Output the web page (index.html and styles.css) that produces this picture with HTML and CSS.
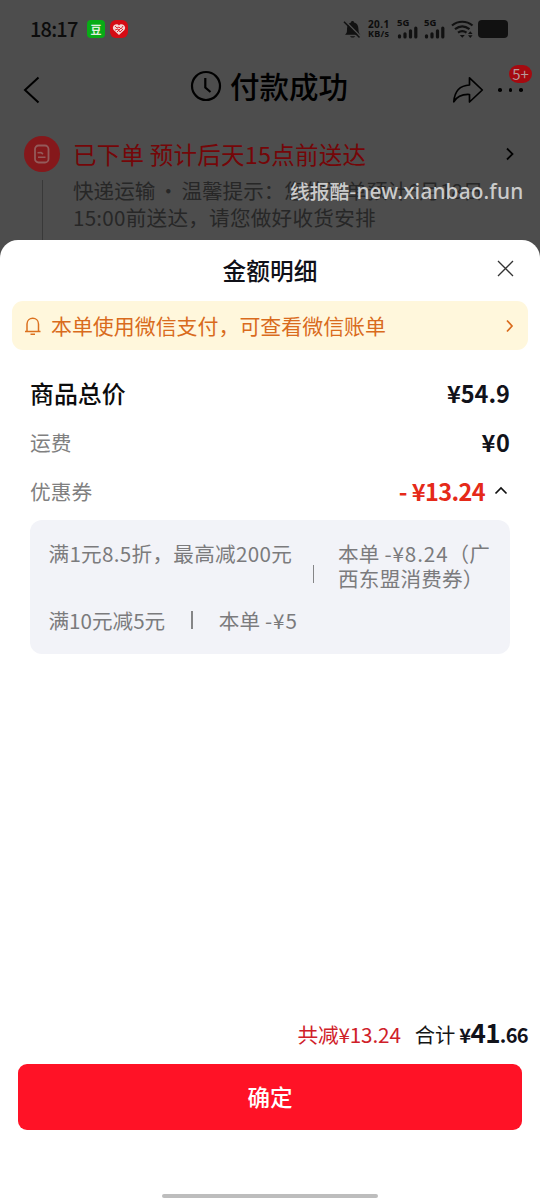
FILE: index.html
```html
<!DOCTYPE html>
<html lang="zh-CN">
<head>
<meta charset="utf-8">
<meta name="viewport" content="width=device-width">
<title>付款成功</title>
<link rel="stylesheet" href="styles.css">
</head>
<body>
<div class="screen">
  <header class="status">
    <span class="time">18:17</span>
    <span class="app green">豆</span>
    <span class="app red"><svg width="14" height="13" viewBox="0 0 14 13"><path d="M7 12 1.600 7C-.8 3.700 3 .1 6 1.500L7 2.600l1-1.100c3-1.400 6.800 2.200 4.400 5.500Z" fill="#f3d5d5"/><path d="m3 3 2 2 2-1 2 2 2-3M3 7l3-1 2 3 3-3M5 9l3-3" fill="none" stroke="#d9191e" stroke-width=".9"/></svg></span>
    <div class="tray">
      <svg class="mute" width="18" height="19" viewBox="0 0 18 19"><path d="M2 14.700c1.600-1.500 2-2.500 2-5C4 5 6 3 8 2.400 8.200.5 10.800.5 11 2.400c2.500.6 4.500 2.600 4.500 7.300 0 2.500.6 3.500 1.700 5Z" fill="#111"/><path d="M7 16.300h5.200c-.8 1.600-4.400 1.600-5.200 0Z" fill="#111"/><path d="M2.200 1 18 17" stroke="#4d4d4d" stroke-width="1.600"/><path d="M1 1.700 16.500 17.600" stroke="#111" stroke-width="1.500"/></svg>
      <div class="speed"><span>20.1</span><span>KB/s</span></div>
      <div class="cell"><span>5G</span><svg width="21" height="13" viewBox="0 0 21 13"><path d="M2.500 11V9.800M8 11V7.800M13.500 11V4.800M18.800 11V2" stroke="#111" stroke-width="3.200" stroke-linecap="round"/></svg></div>
      <div class="cell"><span>5G</span><svg width="21" height="13" viewBox="0 0 21 13"><path d="M2.500 11V9.800M8 11V7.800M13.500 11V4.800M18.800 11V2" stroke="#111" stroke-width="3.200" stroke-linecap="round"/></svg></div>
      <svg class="wifi" width="23" height="19" viewBox="0 0 23 19"><path d="M1 5.500c6-5 14.500-5 20.500 0M4 9.200c4.500-3.500 10-3.500 14.500 0M7 12.600c3-2 5.500-2 8.500 0" fill="none" stroke="#111" stroke-width="2.200"/><path d="M8.800 15h5l-2.500 2.800ZM17 14l2.300-2.800L21.600 14ZM17 15.300h4.600L19.300 18Z" fill="#111"/></svg>
      <span class="battery"></span>
    </div>
  </header>

  <nav class="nav">
    <svg class="back" width="18" height="28" viewBox="0 0 18 28"><path d="M15.500 1.500 2 14l13.500 12.500" fill="none" stroke="#000" stroke-width="2"/></svg>
    <h1 class="title"><svg width="32" height="32" viewBox="0 0 32 32"><circle cx="16" cy="16" r="14" fill="none" stroke="#000" stroke-width="2.200"/><path d="M15.300 8v9.500l5.200 4.500" fill="none" stroke="#000" stroke-width="2.200"/></svg><span>付款成功</span></h1>
    <svg class="share" width="32" height="28" viewBox="0 0 32 28"><path d="M17.500 1.800 30.300 14 17.500 26v-7.500C9 18 5 20.500 1.800 25.800 2.500 16 7.500 9.500 17.500 9Z" fill="none" stroke="#000" stroke-width="1.700" stroke-linejoin="round"/></svg>
    <div class="more"><i></i><i></i><i></i><span class="badge">5+</span></div>
  </nav>

  <section class="order">
    <div class="rail">
      <span class="disc"><svg width="18" height="20" viewBox="0 0 18 20"><rect x="2" y="1.500" width="13.500" height="17" rx="3.500" fill="none" stroke="#945a5a" stroke-width="1.800"/><path d="M4.500 8.800 8 8.500l2 1.500M5 13.300h7.500" fill="none" stroke="#945a5a" stroke-width="1.600"/></svg></span>
      <span class="line"></span>
    </div>
    <div class="info">
      <div class="eta"><span>已下单 预计后天15点前送达</span><svg width="10" height="14" viewBox="0 0 10 14"><path d="m2 1.500 5.500 5.500L2 12.500" fill="none" stroke="#000" stroke-width="1.800"/></svg></div>
      <p class="tip">快递运输<span class="dot">·</span>温馨提示：您的订单预计6月18日<br><span class="second-line">15:00前送达，请您做好收货安排</span></p>
    </div>
  </section>
  <div class="watermark">线报酷-<span>new.xianbao.fun</span></div>

  <main class="sheet">
    <div class="head">
      <h2>金额明细</h2>
      <svg class="close" width="17" height="17" viewBox="0 0 17 17"><path d="m1 1 15 15M16 1 1 16" stroke="#333" stroke-width="1.300"/></svg>
    </div>
    <div class="notice">
      <svg width="18" height="20" viewBox="0 0 18 20"><path d="M1 15.500h15.500M3 15.500V8c0-7.600 11.500-7.600 11.500 0v7.500M6.500 18.300h4.500" fill="none" stroke="#db711f" stroke-width="1.500"/></svg>
      <span>本单使用微信支付，可查看微信账单</span>
      <svg class="go" width="9" height="14" viewBox="0 0 9 14"><path d="m2 1.500 5 5.500-5 5.500" fill="none" stroke="#d96b1d" stroke-width="1.700"/></svg>
    </div>
    <div class="rows">
      <div class="row total"><span>商品总价</span><b>¥54.9</b></div>
      <div class="row"><span>运费</span><b class="zero">¥0</b></div>
      <div class="row"><span>优惠券</span><b class="cut">- ¥13.24</b><svg width="14" height="9" viewBox="0 0 14 9"><path d="m1.500 7.500 5.500-5.500 5.500 5.500" fill="none" stroke="#111" stroke-width="1.700"/></svg></div>
    </div>
    <div class="coupons">
      <div class="coupon"><span class="rule">满1元8.5折，最高减200元</span><i></i><span class="amount">本单 <span class="num">-¥8.24</span>（广<br>西东盟消费券）</span></div>
      <div class="coupon second"><span>满10元减5元</span><i></i><span class="amount">本单 <span class="num">-¥5</span></span></div>
    </div>
    <footer class="foot">
      <div class="sum"><span class="saved">共减¥13.24</span><span class="label">合计</span><b>¥<em>41</em>.66</b></div>
      <button class="ok">确定</button>
      <span class="home"></span>
    </footer>
  </main>
</div>
</body>
</html>
```

FILE: styles.css
```css
* { box-sizing: border-box; }
body {
  margin: 0;
  background: #4d4d4d;
  font-family: "Noto Sans CJK SC", sans-serif;
}
svg { display: block; flex: none; }
h1, h2, p { margin: 0; font-weight: 500; }
i, em { font-style: normal; }

.screen {
  position: relative;
  width: 540px;
  height: 1200px;
  overflow: hidden;
  display: flex;
  flex-direction: column;
  white-space: nowrap;
}

/* Status bar */
.status {
  height: 58px;
  padding: 0 32px 0 30px;
  display: flex;
  align-items: center;
  color: #0c0c0c;
}
.time { width: 57px; font: 500 20px/26px "Noto Sans CJK SC", sans-serif; letter-spacing: -.8px; }
.app {
  width: 18px;
  height: 18px;
  border-radius: 4px;
  margin-right: 5px;
  display: flex;
  align-items: center;
  justify-content: center;
  font-size: 11px;
  font-weight: 700;
  line-height: 18px;
}
.green { background: #08ac16; color: #e0f0e0; }
.red { background: #d50b14; border-radius: 6px; }
.tray { margin-left: auto; display: flex; align-items: center; }
.mute { margin-right: 7px; }
.speed {
  width: 24px;
  display: flex;
  flex-direction: column;
  font: 700 10px/10.500px "Noto Sans", sans-serif;
}
.speed span:first-child { letter-spacing: .4px; }
.speed span:last-child { font-size: 9px; letter-spacing: .3px; }
.cell {
  width: 22px;
  height: 20px;
  margin-left: 5px;
  position: relative;
  display: flex;
  align-items: flex-end;
}
.cell span { position: absolute; left: 0; top: -1px; font: 700 9.500px/10px "Noto Sans", sans-serif; }
.wifi { margin: 0 4px 0 5px; }
.battery { width: 30px; height: 18px; border-radius: 4px; background: #111; }

/* Navigation */
.nav {
  height: 62px;
  padding: 0 9px 0 23px;
  display: flex;
  align-items: center;
  position: relative;
}
.back { margin-top: 2px; }
.title { margin: -6px 0 0 149px; display: flex; align-items: center; gap: 8px; }
.title span { font-size: 29.500px; line-height: 40px; margin-top: -2px; }
.share { margin: 2px 0 0 auto; }
.more { width: 39px; margin: 2px 0 0 8px; padding: 0 0 0 6px; display: flex; gap: 7px; position: relative; }
.more i { width: 3.500px; height: 3.500px; border-radius: 50%; background: #000; }
.badge {
  position: absolute;
  left: 17px;
  top: -23px;
  width: 23px;
  height: 18px;
  border-radius: 9px;
  background: #a50a10;
  color: #b59a9a;
  font-size: 15px;
  line-height: 17px;
  text-align: center;
}

/* Order progress */
.order { height: 120px; padding-left: 24px; display: flex; }
.rail { width: 36px; display: flex; flex-direction: column; align-items: center; }
.disc {
  width: 36px;
  height: 36px;
  margin-top: 16px;
  border-radius: 50%;
  background: #85181b;
  display: flex;
  align-items: center;
  justify-content: center;
}
.line { width: 1px; height: 60px; margin-top: 8px; background: #393939; }
.info { flex: 1; padding: 18px 25px 0 13px; }
.eta { display: flex; align-items: center; justify-content: space-between; color: #750608; font-size: 23.500px; line-height: 32px; letter-spacing: .25px; }
.tip { margin-top: 7px; color: #272727; font-size: 20.600px; font-weight: 400; line-height: 27px; }
.dot { display: inline-block; width: 26px; text-align: center; }
.second-line { letter-spacing: .25px; }
.watermark {
  position: absolute;
  left: 290px;
  top: 177px;
  color: #cbcbcb;
  font-size: 19.800px;
  font-weight: 500;
  line-height: 28px;
}
.watermark span { font-family: "Noto Sans", sans-serif; font-size: 20.800px; letter-spacing: .15px; }

/* Bottom sheet */
.sheet {
  height: 960px;
  border-radius: 18px 18px 0 0;
  background: #fff;
  display: flex;
  flex-direction: column;
}
.head { height: 61px; position: relative; display: flex; justify-content: center; align-items: center; }
.head h2 { color: #101018; font-size: 23.700px; line-height: 32px; margin-top: -1px; }
.close { position: absolute; right: 26px; top: 20px; }
.notice {
  height: 49px;
  margin: 0 12px;
  padding: 0 14px 0 12px;
  border-radius: 11px;
  background: #fff7dc;
  color: #d96b1d;
  display: flex;
  align-items: center;
  font-size: 20.950px;
  line-height: 30px;
}
.notice span { margin: -2px 0 0 9px; }
.go { margin-left: auto; }
.rows { padding: 18px 30px 0; }
.row { height: 49px; display: flex; align-items: center; color: #808080; font-size: 20.700px; }
.row b { margin-left: auto; color: #11121a; font-size: 23.500px; }
.row svg { margin-left: 9px; margin-right: 2px; }
.row .cut { color: #e52a19; letter-spacing: -.6px; }
.row .zero { letter-spacing: .8px; margin-right: -.8px; }
.total { color: #0c0c0c; font-size: 23.900px; font-weight: 500; }
.coupons {
  height: 134px;
  margin: 5px 30px 0;
  padding: 21px 0 21px 18.500px;
  border-radius: 12px;
  background: #f2f3f8;
  color: #7b7b7d;
  font-size: 20.600px;
  line-height: 25px;
}
.coupon { display: flex; }
.rule { letter-spacing: .3px; }
.num { letter-spacing: .9px; }
.coupon i { width: 1.500px; height: 18px; margin: 24px 24px 0 20.500px; background: #858587; }
.amount { letter-spacing: .2px; }
.second { margin-top: 17px; }
.second i { margin: 3px 26px 0; }
.foot { margin-top: auto; height: 184px; padding: 0 18px; display: flex; flex-direction: column; }
.sum { height: 48px; margin: -3px -6px 3px 0; display: flex; justify-content: flex-end; align-items: baseline; line-height: 38px; }
.saved { color: #cf2028; font-size: 20.700px; letter-spacing: -.15px; }
.label { margin: 0 4px 0 14px; color: #151515; font-size: 20.300px; }
.sum b { color: #11121a; font-size: 20px; letter-spacing: -.65px; }
.sum em { font-size: 26px; }
.ok {
  height: 66px;
  flex: none;
  padding: 0 0 3px;
  border: 0;
  border-radius: 9px;
  background: #ff1226;
  color: #fff;
  font: 500 22.500px/60px "Noto Sans CJK SC", sans-serif;
}
.home { width: 216px; height: 4px; margin: auto auto 2px; border-radius: 2px; background: #bdbdbd; }
```
